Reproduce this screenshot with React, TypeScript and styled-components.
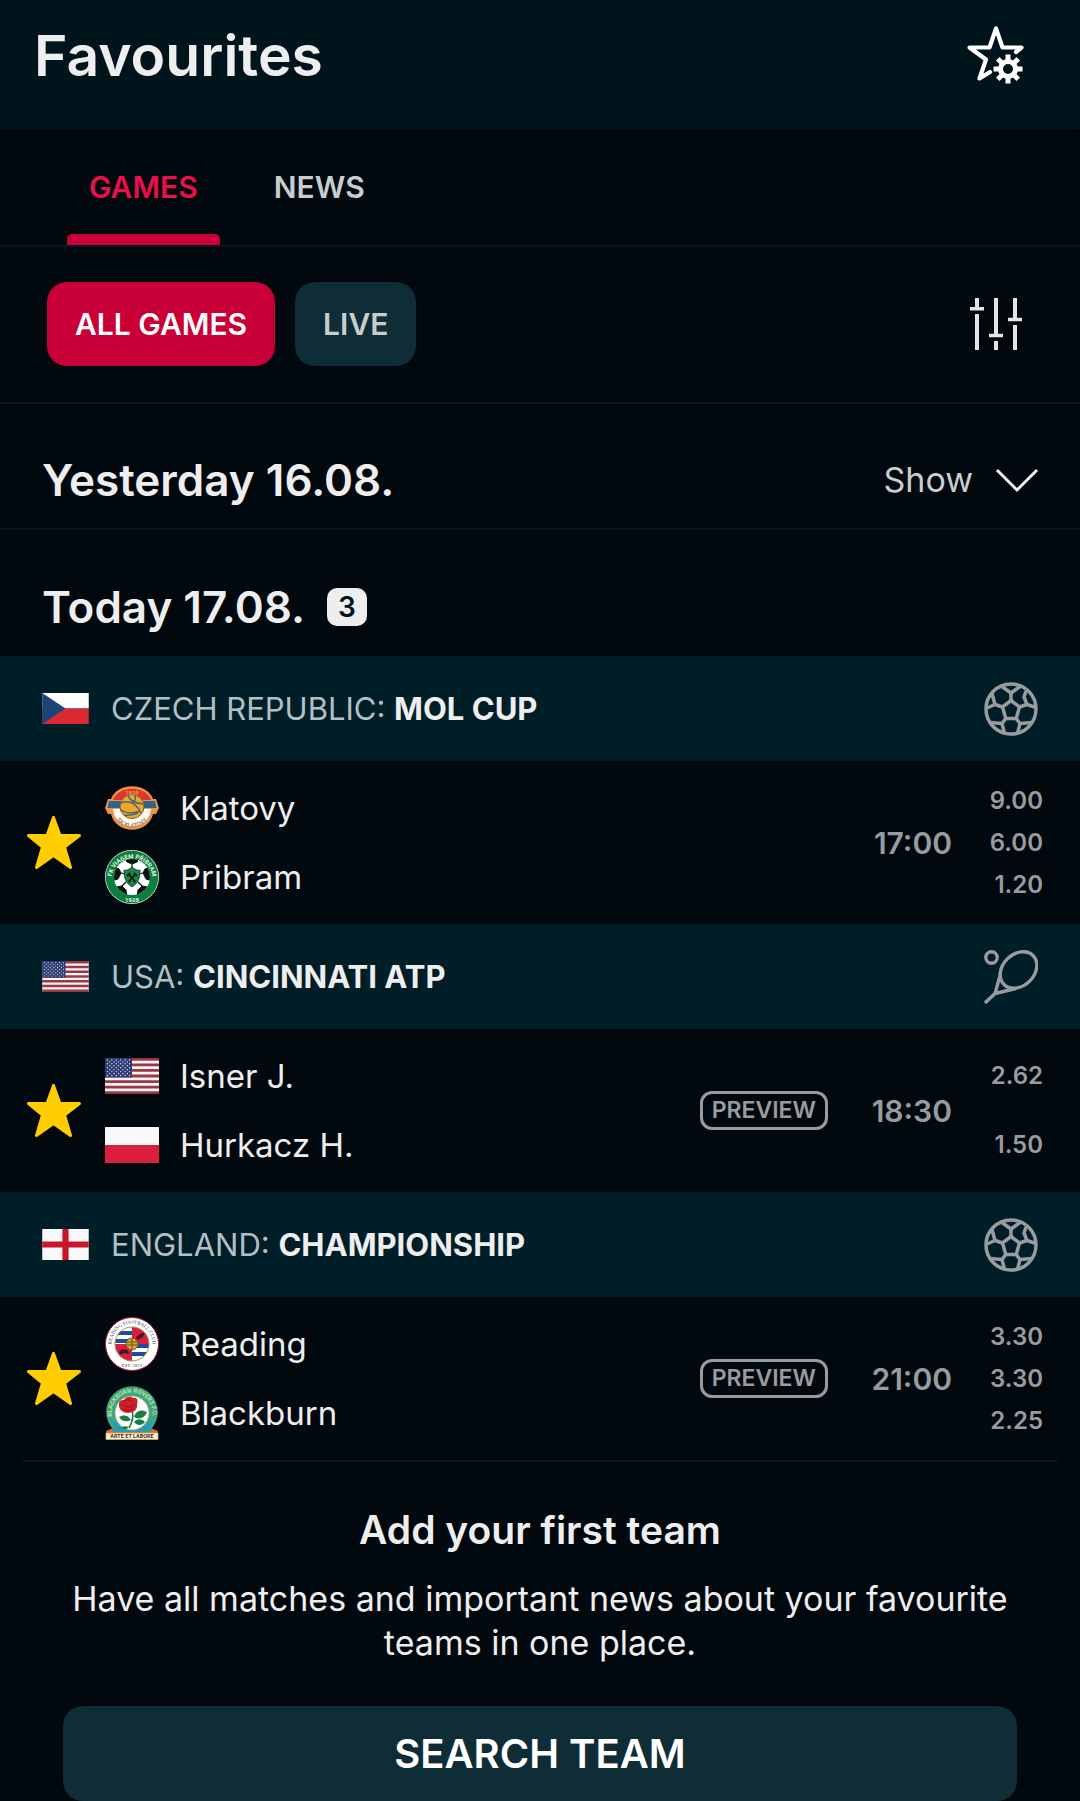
import React from 'react';
import styled, { createGlobalStyle } from 'styled-components';

const c = {
  page: '#01080e',
  header: '#00141c',
  league: '#001e28',
  line: '#06171e',
  chip: '#0f2d37',
  red: '#c80037',
  redText: '#e5114a',
  white: '#eeeeee',
  soft: '#c8cdcd',
  grey: '#999c9f',
  gold: '#ffcd00',
};

const Global = createGlobalStyle`
  *, *::before, *::after { box-sizing: border-box; }
  body { margin: 0; background: ${c.page}; }
  button { font: inherit; color: inherit; background: none; border: 0; padding: 0; cursor: pointer; }
  h1, h2, h3, p, ul { margin: 0; padding: 0; list-style: none; }
  svg { display: block; flex: none; }
`;

const Screen = styled.main`
  background: ${c.page};
  color: ${c.white};
  font-family: Inter, Roboto, "Liberation Sans", sans-serif;
  font-size: 34px;
  line-height: 44px;
`;

const Header = styled.header`
  display: flex;
  justify-content: space-between;
  align-items: flex-start;
  height: 129px;
  padding: 24px 55px 0 34px;
  background: ${c.header};
`;
const Title = styled.h1`
  font-size: 57px;
  line-height: 64px;
  font-weight: 600;
`;
const IconButton = styled.button`
  display: flex;
`;
const SettingsButton = styled(IconButton)`
  padding-top: 2px;
`;

const Tabs = styled.nav`
  display: flex;
  gap: 32px;
  height: 118px;
  padding: 0 67px;
  border-bottom: 2px solid ${c.line};
`;
const Tab = styled.button<{ $active?: boolean }>`
  display: flex;
  flex-direction: column;
  justify-content: space-between;
  padding: 36px 0 0;
  font-size: 30px;
  font-weight: 600;
  color: ${p => (p.$active ? c.redText : c.soft)};
  span { padding: 0 22px; }
  &::after {
    content: '';
    height: 11px;
    width: 100%;
    border-radius: 5px 5px 0 0;
    background: ${p => (p.$active ? c.red : 'transparent')};
  }
`;

const Filters = styled.div`
  display: flex;
  align-items: center;
  gap: 20px;
  height: 157px;
  padding: 0 57px 2px 47px;
  border-bottom: 2px solid ${c.line};
`;
const Chip = styled.button<{ $active?: boolean }>`
  height: 84px;
  padding: 0 28px;
  border-radius: 20px;
  font-size: 30px;
  font-weight: 600;
  color: ${p => (p.$active ? '#ffffff' : c.soft)};
  background: ${p => (p.$active ? c.red : c.chip)};
`;
const Spacer = styled.span`
  flex: 1;
`;

const DayBar = styled.section`
  display: flex;
  align-items: center;
  height: 126px;
  padding: 28px 41px 0 42px;
  border-bottom: 2px solid ${c.line};
`;
const TodayBar = styled(DayBar)`
  gap: 22px;
  border-bottom: 0;
`;
const DayTitle = styled.h2`
  font-size: 44px;
  line-height: 52px;
  font-weight: 600;
`;
const Count = styled.span`
  min-width: 40px;
  border-radius: 10px;
  background: ${c.white};
  color: ${c.header};
  font-size: 28px;
  line-height: 38px;
  font-weight: 600;
  text-align: center;
`;
const Toggle = styled.button`
  display: flex;
  align-items: center;
  gap: 22px;
  margin-left: auto;
  color: ${c.soft};
`;

const LeagueBar = styled.header`
  display: flex;
  align-items: center;
  height: 105px;
  padding: 0 42px;
  background: ${c.league};
`;
const LeagueName = styled.h3`
  flex: 1;
  margin-left: 22px;
  font-size: 31px;
  font-weight: 400;
  color: #b4bfc3;
  b { font-weight: 700; color: ${c.white}; }
`;

const MatchRow = styled.article`
  display: grid;
  grid-template-columns: 105px 1fr auto 124px 91px;
  align-items: center;
  height: 163px;
  padding-right: 37px;
`;
const Star = styled.button`
  display: flex;
  padding-left: 27px;
`;
const Teams = styled.ul`
  display: grid;
  row-gap: 15px;
`;
const Team = styled.li`
  display: flex;
  align-items: center;
  gap: 21px;
  height: 54px;
  font-size: 33px;
`;
const Preview = styled.span`
  border: 3px solid ${c.grey};
  border-radius: 12px;
  padding: 0 9px;
  font-size: 23px;
  line-height: 33px;
  font-weight: 600;
  color: ${c.grey};
`;
const Time = styled.time`
  grid-column: 4;
  text-align: right;
  font-size: 30px;
  font-weight: 600;
  color: ${c.grey};
`;
const Odds = styled.div<{ $two?: boolean }>`
  grid-column: 5;
  display: grid;
  row-gap: ${p => (p.$two ? 27 : 0)}px;
  text-align: right;
  font-size: 24px;
  line-height: 42px;
  font-weight: 600;
  color: ${c.grey};
`;

const Promo = styled.section`
  display: flex;
  flex-direction: column;
  align-items: center;
  margin: 0 22px;
  padding: 44px 41px 0;
  border-top: 2px solid ${c.line};
  text-align: center;
`;
const PromoTitle = styled.h2`
  font-size: 39px;
  line-height: 48px;
  font-weight: 600;
`;
const PromoText = styled.p`
  margin-top: 23px;
  padding-bottom: 41px;
`;
const SearchButton = styled.button`
  width: 100%;
  height: 95px;
  border-radius: 20px;
  background: ${c.chip};
  color: #ffffff;
  font-size: 40px;
  font-weight: 600;
`;

const StarGear = () => {
  const teeth = [0, 45, 90, 135, 180, 225, 270, 315];
  return (
    <svg width="58" height="58" viewBox="0 0 58 58" fill="none">
      <path
        d="M49 26 L54.500 21.500 H35.500 L29 2.500 L22.500 21.500 H2.500 L19 33.500 L12.500 52.500 L23 46"
        stroke="#fff" strokeWidth="4.200" strokeLinejoin="round" strokeLinecap="round"
      />
      <circle cx="41" cy="43" r="7.500" stroke="#fff" strokeWidth="5" />
      {teeth.map(a => (
        <rect key={a} x="38.500" y="28.500" width="5" height="6" fill="#fff" transform={`rotate(${a} 41 43)`} />
      ))}
    </svg>
  );
};

const Sliders = () => (
  <svg width="54" height="54" viewBox="0 0 54 54" stroke="#e4e5e7" fill="none">
    <path strokeWidth="4" d="M8 1v10M8 17v36M27 1v36M27 44v9M46 1v21M46 28v25" />
    <path strokeWidth="3.500" d="M1 11.700h14M20 38.500h14M39 22.500h14" />
  </svg>
);

const Chevron = () => (
  <svg width="44" height="26" viewBox="0 0 44 26" fill="none" stroke={c.white} strokeWidth="3">
    <path d="M2 3l20 20L42 3" />
  </svg>
);

const GoldStar = () => (
  <svg width="54" height="54" viewBox="0 0 54 54" fill={c.gold} stroke={c.gold} strokeWidth="3" strokeLinejoin="round">
    <path d="M26.500 1.500l6.500 18h19.500L37.500 31l6 20.500-17-12-17 12L15.500 31 1.500 19.500H20z" />
  </svg>
);

const Football = () => (
  <svg width="54" height="54" viewBox="0 0 54 54" fill="none" stroke={c.grey} strokeWidth="3.500" strokeLinejoin="round">
    <circle cx="27" cy="27" r="25" />
    <path d="M27 18.500l8.500 6.500-3.300 11.500H21.800L18.500 25z" />
    <path d="M27 18.500V11M35.500 25l7.500-2.500M32.200 36.500l3.800 5M21.800 36.500l-3.800 5M18.500 25L11 22.500" />
    <path d="M27 11L16.500 3.500M27 11l10.500-7.500M43 22.500l-3-7.500 2-6M43 22.500l9 3M36 41.500l-2.500 10M36 41.500l12-1M18 41.500l2.500 10M18 41.500l-12-1M11 22.500l-3-11M11 22.500l-9 4" />
  </svg>
);

const Racket = () => (
  <svg width="54" height="54" viewBox="0 0 54 54" fill="none" stroke={c.grey} strokeWidth="3.400" strokeLinejoin="round">
    <circle cx="7.500" cy="7.500" r="5.700" />
    <ellipse cx="34.500" cy="20" rx="20.500" ry="15.800" transform="rotate(-45 34.500 20)" />
    <path d="M16.500 24L11 43.500 32 38.500M11 43.500L1 53" />
  </svg>
);

const CzechFlag = ({ w }: { w: number }) => (
  <svg width={w} height={Math.round((w * 2) / 3)} viewBox="0 0 60 40">
    <path fill="#fff" d="M0 0h60v20H0z" />
    <path fill="#d82a30" d="M0 20h60v20H0z" />
    <path fill="#1d4477" d="M0 0l30 20L0 40z" />
  </svg>
);

const UsaFlag = ({ w }: { w: number }) => (
  <svg width={w} height={Math.round((w * 2) / 3)} viewBox="0 0 78 52">
    <path fill="#f6f3f5" d="M0 0h78v52H0z" />
    {[0, 8, 16, 24, 32, 40, 48].map(y => <path key={y} fill="#993847" d={`M0 ${y}h78v4H0z`} />)}
    <path fill="#2c3b74" d="M0 0h39v28H0z" />
    {Array.from({ length: 9 }, (_, r) =>
      Array.from({ length: r % 2 ? 5 : 6 }, (_, i) => (
        <circle key={`${r}-${i}`} cx={3.500 + (r % 2 ? 3.200 : 0) + i * 6.400} cy={2.800 + r * 2.800} r="1" fill="#dfe2ee" />
      )),
    )}
  </svg>
);

const PolandFlag = ({ w }: { w: number }) => (
  <svg width={w} height={Math.round((w * 2) / 3)} viewBox="0 0 60 40">
    <path fill="#f9f9f9" d="M0 0h60v20H0z" />
    <path fill="#dc1f3f" d="M0 20h60v20H0z" />
  </svg>
);

const EnglandFlag = ({ w }: { w: number }) => (
  <svg width={w} height={Math.round((w * 2) / 3)} viewBox="0 0 60 40">
    <path fill="#f9f9f9" d="M0 0h60v40H0z" />
    <path fill="#c9152b" d="M26 0h8v40h-8zM0 16h60v8H0z" />
  </svg>
);

const KlatovyCrest = () => (
  <svg width="54" height="54" viewBox="0 0 54 54">
    <defs>
      <path id="klatovyName" d="M8 28a19 18.500 0 0 0 38 0" />
    </defs>
    <path fill="#e8954a" d="M6 18C12 1 42 1 48 18h3l3 9-3 6h-3C43 54 11 54 6 33H3l-3-6 3-9z" />
    <path fill="#fffaf2" d="M8 28h38C44 51 10 51 8 28z" />
    <path fill="#e0352b" d="M8 19C13 4 41 4 46 19z" />
    <path fill="#29668a" d="M4 20h46l1.500 7H2.500z" />
    <circle cx="27" cy="25.500" r="12" fill="#efa72b" stroke="#6b6540" strokeWidth="1" />
    <path fill="none" stroke="#4b6970" strokeWidth="1.500" d="M16 22c8-3 15 0 20 10M23 14c1 5 6 8 15 9M28 22c3-3 3-5 2-8M16 29c6 4 12 4 19 1M19 34c5 1 9 0 14-2" />
    <text x="27" y="14" textAnchor="middle" fontSize="6" fontFamily="Roboto, sans-serif" fill="#f3b347">1898</text>
    <text fontSize="6" fontWeight="700" fontFamily="Roboto, sans-serif" fill="#a98a6a">
      <textPath href="#klatovyName" startOffset="50%" textAnchor="middle">SK KLATOVY</textPath>
    </text>
  </svg>
);

const PribramCrest = () => (
  <svg width="54" height="54" viewBox="0 0 54 54">
    <defs>
      <path id="pribramName" d="M6.500 29a20.500 20.500 0 1 1 41 0" />
      <clipPath id="pribramBall"><circle cx="27" cy="27" r="18" /></clipPath>
    </defs>
    <circle cx="27" cy="27" r="27" fill="#dff0e3" />
    <circle cx="27" cy="27" r="26.300" fill="#0b7f3d" />
    <circle cx="27" cy="27" r="18" fill="#fff" />
    <g clipPath="url(#pribramBall)" fill="#0b1410" stroke="#0b1410">
      <path d="M20 7h14l-2 5-5 2-5-2zM45 17l2 14-6-2-3-6 2-4zM9 17L7 31l6-2 3-6-2-4zM40 43l-8 4 1-7 4-4 6 1zM14 43l8 4-1-7-4-4-6 1z" />
      <path fill="none" strokeWidth="1.200" d="M27 14v6M38 23l-4 1M37 36l-4-4M17 36l4-4M16 23l4 1" />
    </g>
    <path fill="#16854a" stroke="#103d24" strokeWidth=".8" d="M19 20c3 1 5-1 8-3 3 2 5 4 8 3 0 9-2 13-8 17-6-4-8-8-8-17z" />
    <path stroke="#0b1410" strokeWidth="1.800" d="M23.500 24l7 8M30.500 24l-7 8M22 26l3-3M29 23l3 3" />
    <text fontSize="6" fontWeight="700" fontFamily="Roboto, sans-serif" fill="#e8f5ea">
      <textPath href="#pribramName" startOffset="50%" textAnchor="middle">FK VIAGEM PŘÍBRAM</textPath>
    </text>
    <text x="27" y="51.500" textAnchor="middle" fontSize="6" fontWeight="700" fontFamily="Roboto, sans-serif" fill="#e8f5ea">1928</text>
  </svg>
);

const ReadingCrest = () => (
  <svg width="54" height="54" viewBox="0 0 54 54">
    <defs>
      <path id="readingName" d="M8 35a20.500 20.500 0 1 1 38 0" />
      <clipPath id="readingDisc"><circle cx="27" cy="27" r="17" /></clipPath>
    </defs>
    <circle cx="27" cy="27" r="26.500" fill="#fff" stroke="#a32238" />
    <g clipPath="url(#readingDisc)">
      <path fill="#fff" d="M9 9h36v36H9z" />
      <path fill="#d7203f" d="M27 9h18v18H27zM9 27h18v18H9z" />
      <path fill="#1a4f9c" d="M9 14h18v4H9zM9 22h18v4H9zM27 27h18v4H27zM27 35h18v4H27z" />
      <path fill="#4a1420" d="M31 20l4-3 5-2-2 5-3 2-3 1zM14 35l3-3 6 1 1 4-5-1-4 2z" />
    </g>
    <circle cx="27" cy="27" r="17" fill="none" stroke="#a88d48" strokeWidth="1" />
    <circle cx="27" cy="27" r="6" fill="#d3a432" stroke="#70501d" />
    <path stroke="#70501d" d="M22 25h10M22 28h10M27 22v10" />
    <text fontSize="5" fontFamily="Liberation Serif, serif" fill="#2a3f6d">
      <textPath href="#readingName" startOffset="50%" textAnchor="middle">READING FOOTBALL CLUB</textPath>
    </text>
    <text x="27" y="50" textAnchor="middle" fontSize="5" fontFamily="Liberation Serif, serif" fill="#2a3f6d">EST. 1871</text>
  </svg>
);

const BlackburnCrest = () => (
  <svg width="54" height="54" viewBox="0 0 54 54">
    <defs><path id="blackburnName" d="M9.500 38a20.500 20.500 0 1 1 35 0" /></defs>
    <circle cx="27" cy="26" r="25.800" fill="#3aa58c" />
    <path fill="#d8672c" d="M1 45l7-3h38l7 3v3H1z" />
    <path fill="#2d9ab4" d="M8 36h38v10H8z" />
    <circle cx="27" cy="27" r="16.800" fill="#fff" stroke="#dccb6a" strokeWidth=".8" />
    <path fill="none" stroke="#178044" strokeWidth="1.600" d="M27 24c2 6 1 11-3 18" />
    <path fill="#178044" d="M26 34c-3-6-9-5-12-3 3 5 8 5 12 3zM29 31c2-7 8-8 13-5-2 6-8 8-13 5zM29 36c4-4 8-3 11 0-3 4-8 4-11 0zM24 41c-5-2-7 0-8 1 4 2 6 1 8-1z" />
    <path fill="#cf1f2c" d="M14 19c0-5 3-5 5-5 2-4 7-4 9-2 5-1 5 3 4 6 1 5-3 9-9 9-5 0-9-3-9-8z" />
    <path fill="none" stroke="#8d0f1f" strokeWidth="1" d="M17 18c3 4 10 4 13 0M19 16c2-3 6-3 8 0M19 23c3 2 6 2 9 0" />
    <text fontSize="6" fontWeight="700" fontFamily="Roboto, sans-serif" fill="#c9e083">
      <textPath href="#blackburnName" startOffset="50%" textAnchor="middle">BLACKBURN ROVERS F.C.</textPath>
    </text>
    <path fill="#fbf4e4" stroke="#d8a34a" strokeWidth=".8" d="M1 47h52v6.500H1z" />
    <text x="27" y="52.300" textAnchor="middle" fontSize="5.500" fontWeight="700" fontFamily="Roboto, sans-serif" fill="#3b3529">ARTE ET LABORE</text>
  </svg>
);

type Match = {
  id: string;
  country: string;
  league: string;
  flag: React.ReactNode;
  sport: React.ReactNode;
  teams: { name: string; mark: React.ReactNode }[];
  preview?: boolean;
  time: string;
  odds: string[];
};

const matches: Match[] = [
  {
    id: 'mol', country: 'CZECH REPUBLIC', league: 'MOL CUP', flag: <CzechFlag w={47} />, sport: <Football />,
    teams: [{ name: 'Klatovy', mark: <KlatovyCrest /> }, { name: 'Pribram', mark: <PribramCrest /> }],
    time: '17:00', odds: ['9.00', '6.00', '1.20'],
  },
  {
    id: 'atp', country: 'USA', league: 'CINCINNATI ATP', flag: <UsaFlag w={47} />, sport: <Racket />,
    teams: [{ name: 'Isner J.', mark: <UsaFlag w={54} /> }, { name: 'Hurkacz H.', mark: <PolandFlag w={54} /> }],
    preview: true, time: '18:30', odds: ['2.62', '1.50'],
  },
  {
    id: 'champ', country: 'ENGLAND', league: 'CHAMPIONSHIP', flag: <EnglandFlag w={47} />, sport: <Football />,
    teams: [{ name: 'Reading', mark: <ReadingCrest /> }, { name: 'Blackburn', mark: <BlackburnCrest /> }],
    preview: true, time: '21:00', odds: ['3.30', '3.30', '2.25'],
  },
];

export default function App() {
  return (
    <Screen>
      <Global />
      <Header>
        <Title>Favourites</Title>
        <SettingsButton aria-label="Favourite settings"><StarGear /></SettingsButton>
      </Header>
      <Tabs>
        <Tab $active><span>GAMES</span></Tab>
        <Tab><span>NEWS</span></Tab>
      </Tabs>
      <Filters>
        <Chip $active>ALL GAMES</Chip>
        <Chip>LIVE</Chip>
        <Spacer />
        <IconButton aria-label="Filters"><Sliders /></IconButton>
      </Filters>
      <DayBar>
        <DayTitle>Yesterday 16.08.</DayTitle>
        <Toggle>Show<Chevron /></Toggle>
      </DayBar>
      <TodayBar>
        <DayTitle>Today 17.08.</DayTitle>
        <Count>3</Count>
      </TodayBar>
      {matches.map(m => (
        <section key={m.id}>
          <LeagueBar>
            {m.flag}
            <LeagueName>{m.country}: <b>{m.league}</b></LeagueName>
            {m.sport}
          </LeagueBar>
          <MatchRow>
            <Star aria-label="Remove from favourites"><GoldStar /></Star>
            <Teams>
              {m.teams.map(t => <Team key={t.name}>{t.mark}{t.name}</Team>)}
            </Teams>
            {m.preview && <Preview>PREVIEW</Preview>}
            <Time>{m.time}</Time>
            <Odds $two={m.odds.length === 2}>
              {m.odds.map((o, i) => <span key={i}>{o}</span>)}
            </Odds>
          </MatchRow>
        </section>
      ))}
      <Promo>
        <PromoTitle>Add your first team</PromoTitle>
        <PromoText>Have all matches and important news about your favourite teams in one place.</PromoText>
        <SearchButton>SEARCH TEAM</SearchButton>
      </Promo>
    </Screen>
  );
}
